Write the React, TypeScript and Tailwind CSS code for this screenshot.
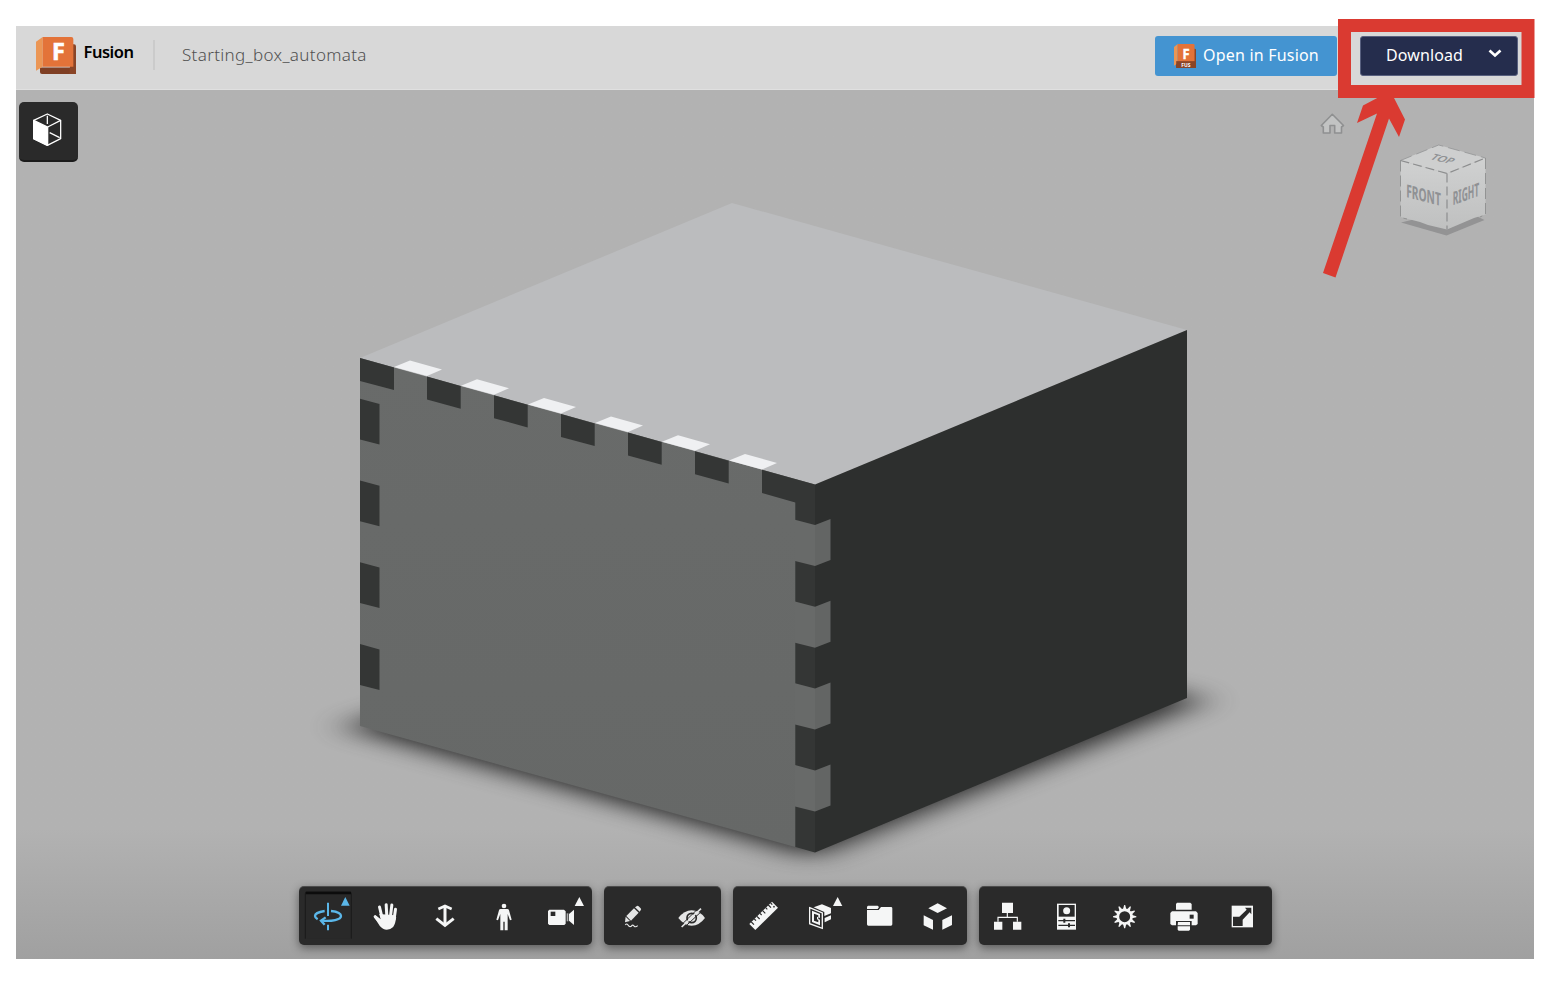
import React from "react";

const FONT = "font-['Noto_Sans','Open_Sans',sans-serif]";

function ToolButton({ box, children }: { box: string; children: React.ReactNode }) {
  return (
    <button className="h-[59px] flex-1">
      <svg viewBox={box} className="block h-full w-full" fill="#f5f6f6">
        {children}
      </svg>
    </button>
  );
}

function ToolGroup({ width, children }: { width: string; children: React.ReactNode }) {
  return (
    <div
      className={`flex h-[59px] rounded-[5px] bg-[#2a2a2a] shadow-[0_3px_10px_rgba(0,0,0,0.45),inset_0_1px_0_rgba(255,255,255,0.16)] ${width}`}
    >
      {children}
    </div>
  );
}

function FusionLogo({ className, tag }: { className: string; tag?: boolean }) {
  return (
    <svg viewBox="0 0 120 112" preserveAspectRatio="none" className={className}>
      <path d="M12 92H120V112H18q-6 0-6-6z" fill="#7f3f24" />
      <path d="M108 22h6q6 0 6 6v84H100z" fill="#8a4527" />
      <path d="M0 14L20 0V90L0 102z" fill="#eb9655" />
      <path d="M20 0H106q6 0 6 6V90H20z" fill="#e37339" />
      <text x={tag ? 66 : 67} y="71" textAnchor="middle" fontSize="70" fontWeight="700" fontFamily="Noto Sans, sans-serif" fill="#fff" stroke="#fff" strokeWidth="2">
        F
      </text>
      {tag && (
        <>
          <rect x="12" y="80" width="105" height="32" fill="#8a4527" />
          <text x="65" y="106" textAnchor="middle" fontSize="27" fontWeight="700" fontFamily="Noto Sans, sans-serif" fill="#fff">
            FUS
          </text>
        </>
      )}
    </svg>
  );
}

const topFingers = [0, 1, 2, 3, 4, 5];
const leftSlots = [0, 1, 2, 3];

function Model() {
  return (
    <svg viewBox="16 90 1518 869" className="absolute inset-0 h-full w-full">
      <defs>
        <filter id="soft" x="-20%" y="-20%" width="140%" height="140%" colorInterpolationFilters="sRGB">
          <feGaussianBlur stdDeviation="20 10" />
        </filter>
        <linearGradient id="frontFace" x1="0" y1="0" x2="0" y2="1">
          <stop offset="0" stopColor="#696b6a" />
          <stop offset="1" stopColor="#666867" />
        </linearGradient>
        <linearGradient id="cube" x1="0" y1="0" x2="0" y2="1">
          <stop offset="0" stopColor="#d0d1d1" />
          <stop offset="1" stopColor="#bfc0c0" />
        </linearGradient>
      </defs>

      <polygon points="343,727 812,857 1206,700 760,596" fill="#1c1c1c" opacity=".9" filter="url(#soft)" />

      <polygon points="732,203 1187,330 815,484.500 360,358" fill="#bbbcbe" />
      <polygon points="360,358 815,484.500 815,852.500 360,726" fill="url(#frontFace)" />
      <polygon points="815,484.500 1187,330 1187,698 815,852.500" fill="#2d2f2e" />

      {topFingers.map((i) => (
        <g key={i} transform={`translate(${i * 67} ${i * 18.7})`}>
          <polygon points="394,367 410,360.500 442,369.500 427,376" fill="#eff0f2" />
        </g>
      ))}
      <polygon points="360,358 394,367.400 394,390 360,381" fill="#343635" />
      {topFingers.slice(0, 5).map((i) => (
        <polygon
          key={i}
          transform={`translate(${i * 67} ${i * 18.7})`}
          points="427,376.500 460.700,386 460.700,408.700 427,399.500"
          fill="#343635"
        />
      ))}
      <polygon points="762,469.700 815,484.500 815,852.500 795.300,847 795.300,502.500 762,493" fill="#343635" />
      {leftSlots.map((i) => (
        <g key={i} transform={`translate(0 ${i * 81.8})`}>
          <polygon points="360,398.700 379.500,404 379.500,444.500 360,439.500" fill="#343635" />
          <polygon points="795,519.700 815,525 815,566 795,561" fill="#686a69" />
          <polygon points="815,525 830.500,519 830.500,560 815,566" fill="#636564" />
        </g>
      ))}

      <path
        d="M1332.300 114.300L1343.500 125.500L1341.500 127V133H1334.700V125.500H1330V133H1323.300V127L1321.300 125.500Z"
        fill="#c2c3c3"
        stroke="#8f9091"
        strokeWidth="1.600"
        strokeLinejoin="round"
      />

      <polygon points="1401,222.500 1446.500,235.500 1484.500,220 1460,208" fill="#939394" />
      <polygon points="1438.700,145 1485.500,158 1447,173.500 1400.500,160.500" fill="#cecfcf" />
      <polygon points="1400.500,160.500 1447,173.500 1447,229.500 1428,225 1420,222 1400.500,217" fill="url(#cube)" />
      <polygon points="1447,173.500 1485.500,158 1485.500,214.500 1474,218 1447,229.500" fill="url(#cube)" />
      <g fill="none" stroke="#8d8e8f" strokeWidth="1.200">
        <path d="M1400.500 160.500L1447 173.500L1485.500 158M1447 173.500V229.500" strokeDasharray="9 4" />
        <path d="M1400.500 160.500V217.500L1407 219M1485.500 158V214.500L1480 217" strokeDasharray="11 4" strokeWidth=".9" />
        <path d="M1400.500 160.500L1438.700 145L1485.500 158" strokeDasharray="12 5" strokeWidth=".7" />
      </g>
      <g fontFamily="Noto Sans, sans-serif" fill="#8f9194" textAnchor="middle">
        <text transform="matrix(.77 .2 0 1 1423.500 201.500)" fontSize="18" fontWeight="700" textLength="45" lengthAdjust="spacingAndGlyphs">
          FRONT
        </text>
        <text transform="matrix(.68 -.24 0 1 1466 200.500)" fontSize="18.500" fontWeight="700" textLength="39" lengthAdjust="spacingAndGlyphs">
          RIGHT
        </text>
        <text transform="matrix(.9 .22 -.5 .46 1440 161.600)" fontSize="16" fontWeight="600" textLength="24" lengthAdjust="spacingAndGlyphs">
          TOP
        </text>
      </g>
    </svg>
  );
}

function Toolbar() {
  return (
    <div className="absolute bottom-[14px] left-[283px] flex gap-3">
      <ToolGroup width="w-[293px]">
        <ToolButton box="27 34 175.8 177">
          <rect x="45" y="53" width="140" height="139" rx="5" fill="#292929" />
          <path d="M46 192V57q0-5 5-5H179q5 0 5 5V192" fill="none" stroke="#1a1a1a" strokeWidth="3" />
          <path d="M47 55H183" stroke="#0c0c0c" strokeWidth="7" />
          <path d="M153 93L166 67L179 93z" fill="#5bb7e9" />
          <g fill="none" stroke="#5bb7e9" strokeWidth="7">
            <path d="M114 84V124M114 150V167" strokeWidth="6" />
            <path d="M104 109C88 111 75 117 75 124C75 128 78 131 83 134M123 109C141 111 153 117 153 124C153 135 126 141 95 138" />
            <path d="M107 128L93 138L104 150" />
          </g>
        </ToolButton>
        <ToolButton box="204.500 34 175.800 177">
          <path d="M268 118L315 122L319 128Q317 148 310 157Q302 165 291 165Q279 165 270 154L254 129Q253 122 260 124L273 134z" />
          <g fill="none" stroke="#f5f6f6" strokeWidth="9" strokeLinecap="round">
            <path d="M269 97L277 130M289 90L291 125M306 91L302 125M317 104L313 132M256 126L276 148" />
          </g>
        </ToolButton>
        <ToolButton box="379 34 175.800 177">
          <g fill="none" stroke="#f5f6f6">
            <path d="M466 93V151" strokeWidth="9" />
            <path d="M446 103L466 94L486 103" strokeWidth="8" />
            <path d="M440 132L466 152L492 132" strokeWidth="9" />
          </g>
        </ToolButton>
        <ToolButton box="555 34 175.800 177">
          <circle cx="642" cy="94" r="7" />
          <path d="M632 103H652Q656 103 657 107L665 135L660 137L653 118V167H644V141H640V167H631V118L624 137L619 135L627 107Q628 103 632 103z" />
        </ToolButton>
        <ToolButton box="730 34 175.800 177">
          <path d="M779 105H823L828 110V147L824 151H779L775 147V109z" />
          <rect x="783" y="111" width="14" height="13" fill="#2a2a2a" />
          <rect x="831" y="116" width="5" height="24" opacity=".65" />
          <path d="M838 118L853 105V151L838 138z" />
          <path d="M855 94L869 67L883 94z" />
        </ToolButton>
      </ToolGroup>

      <ToolGroup width="w-[117px]">
        <ToolButton box="42 34 175.600 177">
          <g opacity=".92">
            <path d="M135 98L141 94Q143 92 146 95L152 101Q155 104 152 107L149 111z" />
            <path d="M132 101L146 114L123 138L109 124z" />
            <path d="M107 126L120 139L105 143z" />
            <path d="M106 151Q110 145 114 151Q118 158 124 155Q127 148 132 154Q137 159 143 153" fill="none" stroke="#f5f6f6" strokeWidth="3.500" />
          </g>
        </ToolButton>
        <ToolButton box="219 34 175.600 177">
          <g opacity=".92">
            <path d="M265 130Q283 107 305 107Q328 107 345 130Q328 153 305 153Q283 153 265 130z" />
            <circle cx="305" cy="130" r="14" fill="none" stroke="#2a2a2a" strokeWidth="5" />
            <path d="M271 154L327 99" stroke="#2a2a2a" strokeWidth="3" />
            <path d="M275 157L333 102" stroke="#f5f6f6" strokeWidth="5" />
            <path d="M281 160L337 108" stroke="#2a2a2a" strokeWidth="3" />
          </g>
        </ToolButton>
      </ToolGroup>

      <ToolGroup width="w-[234px]">
        <ToolButton box="429 34 175.600 177">
          <path d="M478 148L546 81L564 99L496 166z" />
          <path d="M484 142L492 150M493 133L498 138M501 125L509 133M510 116L515 121M518 108L526 116M527 99L532 104M535 91L543 99M542 85L547 90" stroke="#2a2a2a" strokeWidth="3.500" />
          <circle cx="552" cy="96" r="2.500" fill="#2a2a2a" />
        </ToolButton>
        <ToolButton box="606 34 175.600 177">
          <path d="M671 98L696 89L723 100V116L703 124V112z" />
          <path d="M704 130L723 122V134L704 143z" />
          <path d="M659 99L697 115V161L659 147z" fill="#2a2a2a" stroke="#f5f6f6" strokeWidth="4" />
          <path d="M666 108L690 118V152L666 142z" />
          <path d="M672 117L685 122V128L681 126V134L685 136V143L672 138z" fill="#2a2a2a" />
          <path d="M685 128L690 130V135L685 133z" fill="#2a2a2a" />
          <path d="M729 94L743 67L757 94z" />
        </ToolButton>
        <ToolButton box="780 34 175.600 177">
          <path d="M834 93H863L867 97L863 103H831V96z" />
          <path d="M831 106H866L873 97H903Q907 97 907 101V149Q907 153 903 153H835Q831 153 831 149z" />
        </ToolButton>
        <ToolButton box="957 34 175.600 177">
          <path d="M1043 86L1071 101L1043 115L1015 101z" />
          <path d="M1001 122L1029 136V165L1001 152z" />
          <path d="M1057 136L1086 122V151L1057 165z" />
        </ToolButton>
      </ToolGroup>

      <ToolGroup width="w-[293px]">
        <ToolButton box="27 34 175.800 177">
          <path d="M96 84H129V115H96zM72 141H97V165H72zM129 141H154V165H129z" />
          <path d="M112 115V128M84 141V128H142V141" fill="none" stroke="#f5f6f6" strokeWidth="3.500" />
        </ToolButton>
        <ToolButton box="204 34 175.800 177">
          <rect x="261" y="87" width="57" height="78" />
          <rect x="266" y="91" width="48" height="35" fill="#2a2a2a" />
          <circle cx="290" cy="108" r="10.500" />
          <path d="M265 138H315M265 152H315" stroke="#2a2a2a" strokeWidth="3.500" />
          <path d="M283 132V144M297 146V158" stroke="#2a2a2a" strokeWidth="6" />
        </ToolButton>
        <ToolButton box="379 34 175.800 177">
          <circle cx="465" cy="126" r="20.500" fill="none" stroke="#f5f6f6" strokeWidth="8" />
          {[0, 30, 60, 90, 120, 150, 180, 210, 240, 270, 300, 330].map((a) => (
            <path key={a} d="M460 104L463.500 91H466.500L470 104z" transform={`rotate(${a} 465 126)`} />
          ))}
        </ToolButton>
        <ToolButton box="556 34 175.800 177">
          <path d="M622 84H662L666 88V105H619V88z" />
          <path d="M607 110H679L684 115V148L679 152H607L602 148V115z" />
          <rect x="660" y="120" width="12" height="12" fill="#2a2a2a" />
          <path d="M619 139H666V168H619z" fill="#2a2a2a" />
          <path d="M625 142H661V152H624zM624 155H661V165L658 168H627L624 165z" />
        </ToolButton>
        <ToolButton box="729 34 175.800 177">
          <rect x="785" y="93" width="64" height="65" />
          <path d="M789 126H808L830 105L825 99H844V119L839 113L818 135V154H789z" fill="#2a2a2a" />
        </ToolButton>
      </ToolGroup>
    </div>
  );
}

function Callout() {
  return (
    <svg viewBox="0 0 1564 986" className="pointer-events-none absolute inset-0 h-[986px] w-[1564px]">
      <rect x="1344.500" y="25.500" width="183.500" height="66" fill="none" stroke="#da3a31" strokeWidth="13" />
      <polygon
        points="1323,273 1377,113.500 1357,123 1363,105.500 1381,96 1393,96 1405,119.500 1399,137 1389,118.500 1335.500,277.500"
        fill="#da3a31"
      />
    </svg>
  );
}

export default function App() {
  return (
    <div className={`relative h-[986px] w-[1564px] overflow-hidden bg-white px-4 pt-[26px] ${FONT}`}>
      <div className="flex h-[933px] w-[1518px] flex-col">
        <header className="flex h-16 shrink-0 items-center border-b border-[#e0e0e0] bg-[#d8d8d8] pr-4 pl-[19.5px]">
          <FusionLogo className="-mt-[5px] h-[37px] w-10" />
          <span className="-mt-2.5 ml-2 w-[51px] text-[16.5px] font-semibold tracking-[-0.5px] whitespace-nowrap text-black">Fusion</span>
          <div className="-mt-1.5 ml-[18.5px] h-[30px] w-0.5 bg-[#cbcbcb]" />
          <span className="-mt-1.5 ml-[27px] text-[17px] font-light tracking-[0.33px] text-[#505050]">Starting_box_automata</span>
          <button className="-mt-1 ml-auto flex h-10 w-[182px] items-center rounded-[3px] bg-[#4494d1] pl-[19px] text-white">
            <FusionLogo tag className="h-6 w-[22px]" />
            <span className="-mt-0.5 ml-[7px] text-[16px] tracking-[0.2px] whitespace-nowrap">Open in Fusion</span>
          </button>
          <button className="-mt-1 ml-[23px] flex h-10 w-[158px] items-center rounded-[3px] border border-[#58607f] bg-[#252d4d] pl-[25px] text-white">
            <span className="-mt-0.5 text-[16px] tracking-[0.1px]">Download</span>
            <svg viewBox="0 0 14 9" className="-mt-1 mr-[15px] ml-auto h-[9px] w-[14px]">
              <path d="M1.500 1.500L7 6.500L12.500 1.500" fill="none" stroke="#fff" strokeWidth="2.700" />
            </svg>
          </button>
        </header>
        <main className="relative flex-1 bg-linear-to-b from-[#b2b2b2] from-85% to-[#a0a0a0]">
          <Model />
          <button className="absolute top-3 left-[3px] h-[60px] w-[59px] rounded-[5px] border-b-2 border-[#1b1b1b] bg-[#2a2a2a]">
            <svg viewBox="27 246 177 177" className="block h-[59px] w-[59px]" fill="none" stroke="#fff" strokeWidth="3.800" strokeLinejoin="round">
              <path d="M71 301L112 282L152 301V356L112 376L71 356z" />
              <path d="M71 301L113 321V376L71 356z" fill="#fff" />
              <path d="M113 321L152 301M112 287V312M119 338L149 353" />
            </svg>
          </button>
          <Toolbar />
        </main>
      </div>
      <Callout />
    </div>
  );
}
